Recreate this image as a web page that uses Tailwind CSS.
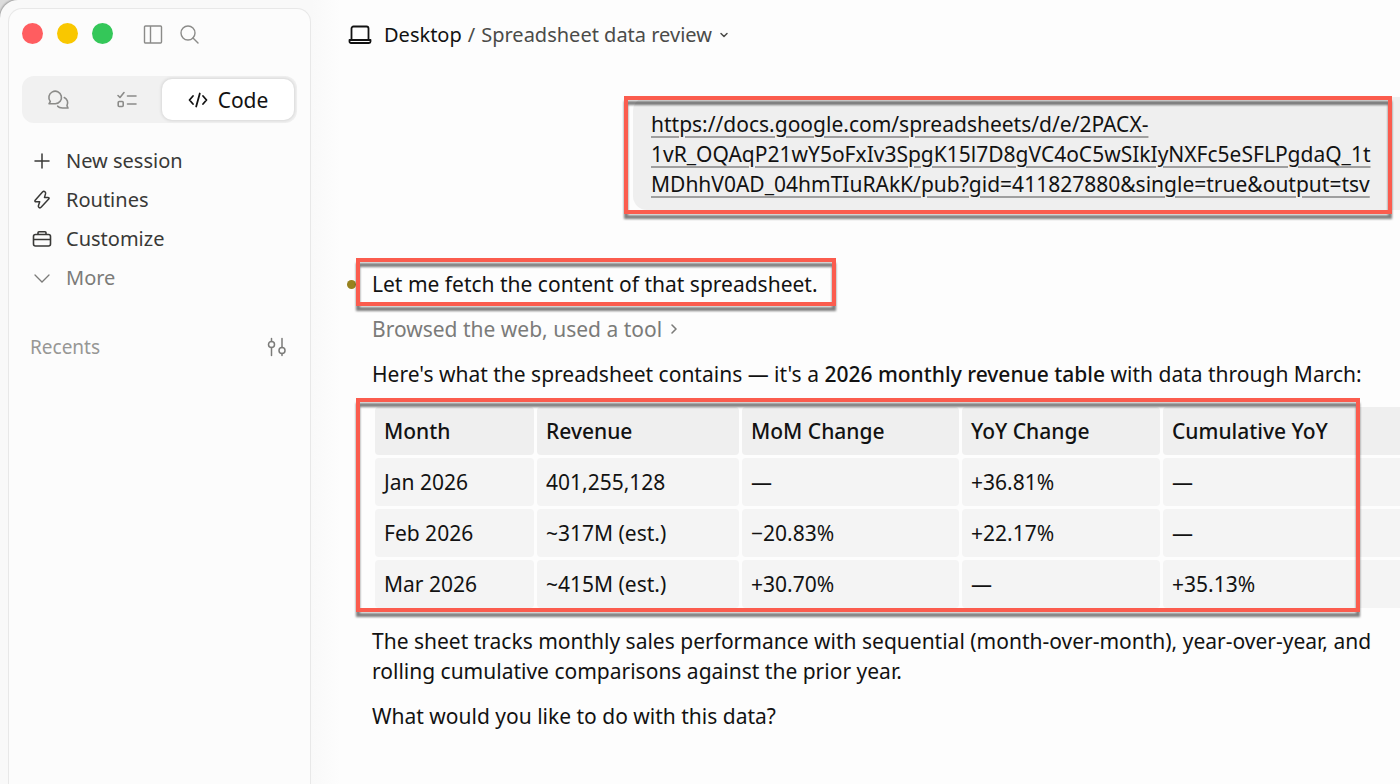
<!DOCTYPE html>
<html lang="en">
<head>
  <meta charset="UTF-8">
  <meta name="viewport" content="width=device-width, initial-scale=1.0">
  <title>Spreadsheet data review</title>
  <script src="https://cdn.jsdelivr.net/npm/@tailwindcss/browser@4"></script>
</head>
<body class="bg-[#dcdcdc] font-['Noto_Sans',sans-serif] text-xl leading-[30px] text-[#121212] overflow-hidden">
  <div class="flex min-h-screen rounded-tl-[18px] bg-[#f9f9f9] shadow-[0_0_2px_1px_rgb(0_0_0/0.3)]">

    <!-- Sidebar -->
    <aside class="mt-2 ml-2 flex w-[303px] shrink-0 flex-col rounded-t-[14px] border border-b-0 border-[#e8e8e8] bg-[#fcfcfc] px-[13px]">
      <div class="flex items-center gap-[14px] pt-[14px]">
        <button aria-label="Close" class="size-[21px] rounded-full bg-[#ff5d60]"></button>
        <button aria-label="Minimize" class="size-[21px] rounded-full bg-[#f9c700]"></button>
        <button aria-label="Zoom" class="size-[21px] rounded-full bg-[#34c759]"></button>
        <button aria-label="Toggle sidebar" class="ml-4 text-[#8b8b89]">
          <svg class="size-5" viewBox="0 0 20 20" fill="none" stroke="currentColor" stroke-width="1.4"><rect x="1.500" y="2" width="17" height="17" rx="1"/><path d="M7.500 2v17"/></svg>
        </button>
        <button aria-label="Search" class="ml-[2px] text-[#8b8b89]">
          <svg class="size-5" viewBox="0 0 20 20" fill="none" stroke="currentColor" stroke-width="1.4" stroke-linecap="round"><circle cx="9" cy="9" r="7"/><path d="M14 14l5 5"/></svg>
        </button>
      </div>

      <div class="mt-8 flex h-[47px] rounded-xl bg-[#f1f1f1] p-[3px]">
        <button aria-label="Chat" class="flex w-[66px] items-center justify-center text-[#8b8b89]">
          <svg class="size-6" viewBox="0 0 24 24" fill="none" stroke="currentColor" stroke-width="1.600" stroke-linejoin="round" stroke-linecap="round"><path d="M3 15.800l1.300-2.300A6.300 6.300 0 1 1 9.300 15.800z"/><path d="M18.300 9.500a6 6 0 0 1 2.700 8.200l1 2.300h-5.500c-2.300 0-4-.6-4.800-1.800"/></svg>
        </button>
        <button aria-label="Tasks" class="flex w-[71px] items-center justify-center text-[#8b8b89]">
          <svg class="size-6" viewBox="0 0 24 24" fill="none" stroke="currentColor" stroke-width="1.600" stroke-linecap="round" stroke-linejoin="round"><path d="M3 7.500l2 2 4-5M12.500 8H21M12.500 16H21"/><rect x="3.200" y="13.500" width="5" height="5" rx="1"/></svg>
        </button>
        <button class="flex flex-1 items-center justify-center gap-[10px] rounded-[10px] bg-white text-[21px] shadow-[0_0_3px_1px_rgb(0_0_0/0.1)]">
          <svg class="size-5" viewBox="0 0 20 20" fill="none" stroke="currentColor" stroke-width="1.800" stroke-linecap="round" stroke-linejoin="round"><path d="M5 6l-3.500 4L5 14M15 6l3.500 4-3.500 4M11.800 3.500L8.200 16.500"/></svg>
          Code
        </button>
      </div>

      <nav class="mt-[18px] flex flex-col text-[#393937]">
        <a href="#" class="flex h-[39px] items-center gap-[14px] pl-[10px]">
          <svg class="size-5" viewBox="0 0 20 20" fill="none" stroke="currentColor" stroke-width="1.500" stroke-linecap="round"><path d="M10 3v14M3 10h14"/></svg>
          New session
        </a>
        <a href="#" class="flex h-[39px] items-center gap-[14px] pl-[10px]">
          <svg class="size-5" viewBox="0 0 20 20" fill="none" stroke="currentColor" stroke-width="1.500" stroke-linejoin="round"><path d="M10.500 2L3.200 10.200c-.6.800-.2 1.600.8 1.600h3.700L6.500 15.500c-.6 2 1.400 3.200 2.800 1.600l7.400-8c.7-.9.300-1.700-.8-1.700h-3.400l1-3.500C14 1.800 12 .4 10.500 2z"/></svg>
          Routines
        </a>
        <a href="#" class="flex h-[39px] items-center gap-[14px] pl-[10px]">
          <svg class="size-5" viewBox="0 0 20 20" fill="none" stroke="currentColor" stroke-width="1.600" stroke-linejoin="round"><rect x="1.500" y="5.500" width="17" height="11.500" rx="2"/><path d="M6 5.500V3.700a1 1 0 0 1 1-1h6a1 1 0 0 1 1 1v1.800M1.500 10.500h17"/></svg>
          Customize
        </a>
        <a href="#" class="flex h-[39px] items-center gap-[14px] pl-[10px] text-[#7b7b79]">
          <svg class="size-5" viewBox="0 0 20 20" fill="none" stroke="currentColor" stroke-width="1.300" stroke-linecap="round"><path d="M3 7l7 7 7-7"/></svg>
          More
        </a>
      </nav>

      <div class="mt-[35px] flex items-center justify-between pr-[10px] pl-2 text-[19px] text-[#979795]">
        <h2>Recents</h2>
        <button aria-label="Filter sessions" class="text-[#7b7b79]">
          <svg class="size-5" viewBox="0 0 20 20" fill="none" stroke="currentColor" stroke-width="1.500" stroke-linecap="round"><circle cx="4.500" cy="7.500" r="3"/><path d="M4.500 1.500v3M4.500 10.500v8M15 1.500v9M15 16.500v2"/><circle cx="15" cy="13.500" r="3"/></svg>
        </button>
      </div>
    </aside>

    <!-- Conversation -->
    <main class="min-w-0 flex-1 overflow-hidden bg-linear-to-r from-[#f9f9f9] to-[#fdfdfd] to-[30px] pl-[61px]">
      <header class="-ml-6 flex items-center gap-3 pt-5">
        <svg class="size-6 shrink-0" viewBox="0 0 24 24" fill="none" stroke="currentColor" stroke-width="1.800" stroke-linejoin="round"><path d="M3.500 17V5.500a2 2 0 0 1 2-2h13a2 2 0 0 1 2 2V17"/><path d="M1.500 17h21v1.500a1.500 1.500 0 0 1-1.500 1.500H3a1.500 1.500 0 0 1-1.500-1.500z"/></svg>
        <div class="flex items-center gap-[6px]">
          <a href="#">Desktop</a>
          <span class="text-[#4b4b49]">/</span>
          <button class="flex items-center gap-[6px] text-[#4b4b49]">
            Spreadsheet data review
            <svg class="size-3" viewBox="0 0 12 12" fill="none" stroke="currentColor" stroke-width="1.500" stroke-linecap="round" stroke-linejoin="round"><path d="M3 4.500l3 3 3-3"/></svg>
          </button>
        </div>
      </header>

      <div class="text-[21px]">
        <div class="relative mt-[47px] ml-auto w-[767px] rounded-l-[14px] bg-[#efefef] pt-3 pb-[11px] pl-[18px]">
          <a href="#" class="underline decoration-[#9f9f9f] decoration-2 underline-offset-4">https://docs.google.com/spreadsheets/d/e/2PACX-<br>1vR_OQAqP21wY5oFxIv3SpgK15l7D8gVC4oC5wSIkIyNXFc5eSFLPgdaQ_1t<br>MDhhV0AD_04hmTIuRAkK/pub?gid=411827880&amp;single=true&amp;output=tsv</a>
          <div class="pointer-events-none absolute -top-px right-2 -bottom-1 -left-[9px] border-4 border-[#fb5c4e] drop-shadow-[0_5px_1px_rgb(0_0_0/0.5)]"></div>
        </div>

        <div class="mt-[59px] flex flex-col gap-[15px]">
          <p class="relative self-start">
            <span class="absolute top-[11px] -left-[25px] size-[9px] rounded-full bg-[#97821f]"></span>
            Let me fetch the content of that spreadsheet.
            <span class="pointer-events-none absolute -top-[11px] -right-[18px] -bottom-[7px] -left-4 border-4 border-[#fb5c4e] drop-shadow-[0_5px_1px_rgb(0_0_0/0.5)]"></span>
          </p>
          <button class="flex items-center gap-[6px] self-start text-[#7b7b79]">
            Browsed the web, used a tool
            <svg class="size-3" viewBox="0 0 12 12" fill="none" stroke="currentColor" stroke-width="1.600" stroke-linecap="round" stroke-linejoin="round"><path d="M4 2l4 4-4 4"/></svg>
          </button>
          <p>Here's what the spreadsheet contains — it's a <strong class="font-medium">2026 monthly revenue table</strong> with data through March:</p>

          <div class="relative">
            <table class="w-[calc(100%+20px)] table-fixed border-separate border-spacing-[3px] text-left">
              <thead>
                <tr class="*:h-12 *:rounded *:bg-[#efefef] *:px-[9px] *:font-medium">
                  <th class="w-[159px]">Month</th>
                  <th class="w-[202px]">Revenue</th>
                  <th class="w-[217px]">MoM Change</th>
                  <th class="w-[198px]">YoY Change</th>
                  <th>Cumulative YoY</th>
                </tr>
              </thead>
              <tbody class="*:*:h-12 *:*:rounded *:*:bg-[#f4f4f4] *:*:px-[9px]">
                <tr><td>Jan 2026</td><td>401,255,128</td><td>—</td><td>+36.81%</td><td>—</td></tr>
                <tr><td>Feb 2026</td><td>~317M (est.)</td><td>−20.83%</td><td>+22.17%</td><td>—</td></tr>
                <tr><td>Mar 2026</td><td>~415M (est.)</td><td>+30.70%</td><td>—</td><td>+35.13%</td></tr>
              </tbody>
            </table>
            <div class="pointer-events-none absolute -top-[6px] right-10 -bottom-px -left-4 border-4 border-[#fb5c4e] drop-shadow-[0_5px_1px_rgb(0_0_0/0.5)]"></div>
          </div>

          <p class="pr-5">The sheet tracks monthly sales performance with sequential (month-over-month), year-over-year, and rolling cumulative comparisons against the prior year.</p>
          <p>What would you like to do with this data?</p>
        </div>
      </div>
    </main>
  </div>
</body>
</html>
